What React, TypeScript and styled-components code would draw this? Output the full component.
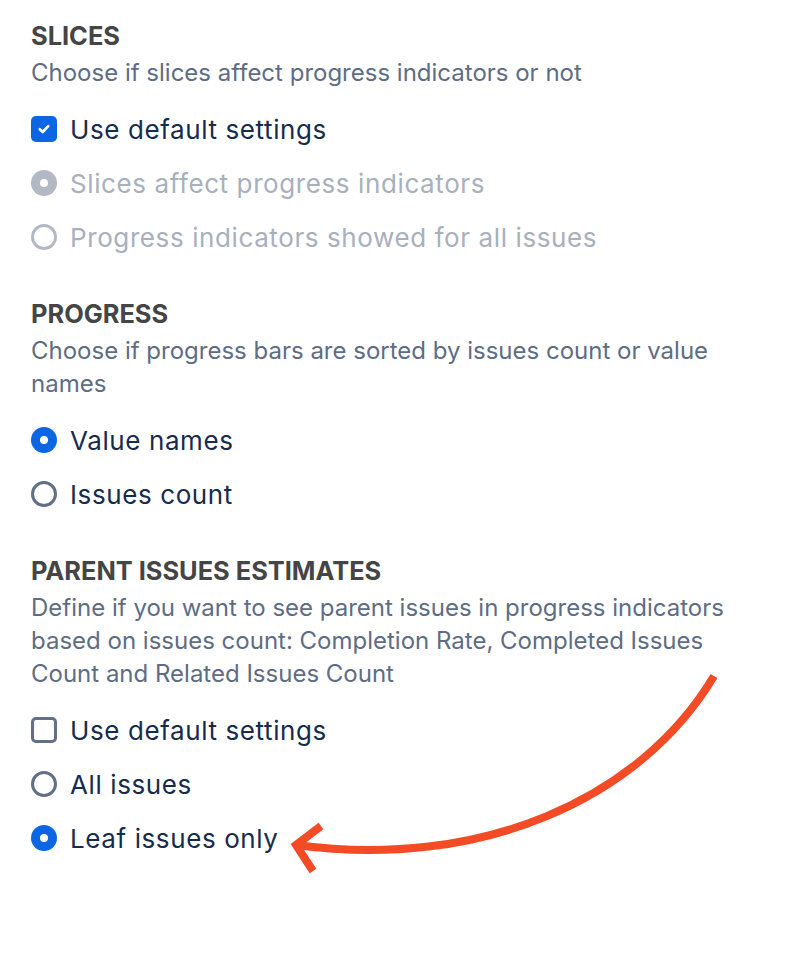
import React from "react";
import styled, { createGlobalStyle } from "styled-components";

const Global = createGlobalStyle`
  html, body { margin: 0; padding: 0; background: #ffffff; }
  body { font-family: Inter, "Noto Sans", sans-serif; -webkit-font-smoothing: antialiased; }
`;

const Page = styled.div`
  position: relative;
  width: 788px;
  height: 960px;
  padding: 20px 31px 0;
  box-sizing: border-box;
  display: flex;
  flex-direction: column;
  gap: 34px;
`;

const Section = styled.section`
  display: flex;
  flex-direction: column;
`;

const Heading = styled.h2`
  margin: 0;
  font-size: 25.4px;
  line-height: 32px;
  font-weight: 700;
  color: #454545;
`;

const Description = styled.p`
  margin: 4px 0 13px;
  font-size: 24px;
  line-height: 33px;
  color: #5e6c84;
`;

const Options = styled.div`
  display: flex;
  flex-direction: column;
`;

const Option = styled.label<{ $disabled?: boolean }>`
  display: flex;
  align-items: center;
  gap: 13px;
  height: 54px;
  font-size: 26px;
  letter-spacing: 0.6px;
  color: ${(p) => (p.$disabled ? "#a8b0bd" : "#172b4d")};
`;

const Box = styled.span<{ $checked?: boolean }>`
  width: 26px;
  height: 26px;
  box-sizing: border-box;
  border-radius: 5px;
  flex-shrink: 0;
  display: flex;
  align-items: center;
  justify-content: center;
  background: ${(p) => (p.$checked ? "#0c66e4" : "#ffffff")};
  border: ${(p) => (p.$checked ? "none" : "3px solid #626f86")};
`;

const Radio = styled.span<{ $checked?: boolean; $disabled?: boolean }>`
  width: 26px;
  height: 26px;
  box-sizing: border-box;
  border-radius: 50%;
  flex-shrink: 0;
  display: flex;
  align-items: center;
  justify-content: center;
  background: ${(p) =>
    p.$checked ? (p.$disabled ? "#b3b9c4" : "#0c66e4") : "#ffffff"};
  border: ${(p) =>
    p.$checked ? "none" : `3px solid ${p.$disabled ? "#b3b9c4" : "#626f86"}`};
  &::after {
    content: "";
    display: ${(p) => (p.$checked ? "block" : "none")};
    width: 8px;
    height: 8px;
    border-radius: 50%;
    background: #ffffff;
  }
`;

const Arrow = styled.svg`
  position: absolute;
  left: 0;
  top: 0;
  pointer-events: none;
`;

const Check = () => (
  <svg width="16" height="16" viewBox="0 0 16 16">
    <path d="M3.8 8.2 L6.7 11 L12.3 5.2" fill="none" stroke="#fff" strokeWidth="2.6" strokeLinecap="round" strokeLinejoin="round" />
  </svg>
);

export default function App() {
  return (
    <>
      <Global />
      <Page>
        <Section>
          <Heading>SLICES</Heading>
          <Description>Choose if slices affect progress indicators or not</Description>
          <Options>
            <Option>
              <Box $checked><Check /></Box>
              Use default settings
            </Option>
            <Option $disabled>
              <Radio $checked $disabled />
              Slices affect progress indicators
            </Option>
            <Option $disabled>
              <Radio $disabled />
              Progress indicators showed for all issues
            </Option>
          </Options>
        </Section>
        <Section>
          <Heading>PROGRESS</Heading>
          <Description>Choose if progress bars are sorted by issues count or value names</Description>
          <Options>
            <Option>
              <Radio $checked />
              Value names
            </Option>
            <Option>
              <Radio />
              Issues count
            </Option>
          </Options>
        </Section>
        <Section>
          <Heading>PARENT ISSUES ESTIMATES</Heading>
          <Description>
            Define if you want to see parent issues in progress indicators based on issues count: Completion Rate, Completed Issues Count and Related Issues Count
          </Description>
          <Options>
            <Option>
              <Box />
              Use default settings
            </Option>
            <Option>
              <Radio />
              All issues
            </Option>
            <Option>
              <Radio $checked />
              Leaf issues only
            </Option>
          </Options>
        </Section>
        <Arrow width="788" height="960" viewBox="0 0 788 960">
          <path d="M714 676 C 640 800, 480 870, 296 845" fill="none" stroke="#f24b26" strokeWidth="8" />
          <path d="M321 826 L 296 845 L 313 871" fill="none" stroke="#f24b26" strokeWidth="8" />
        </Arrow>
      </Page>
    </>
  );
}
